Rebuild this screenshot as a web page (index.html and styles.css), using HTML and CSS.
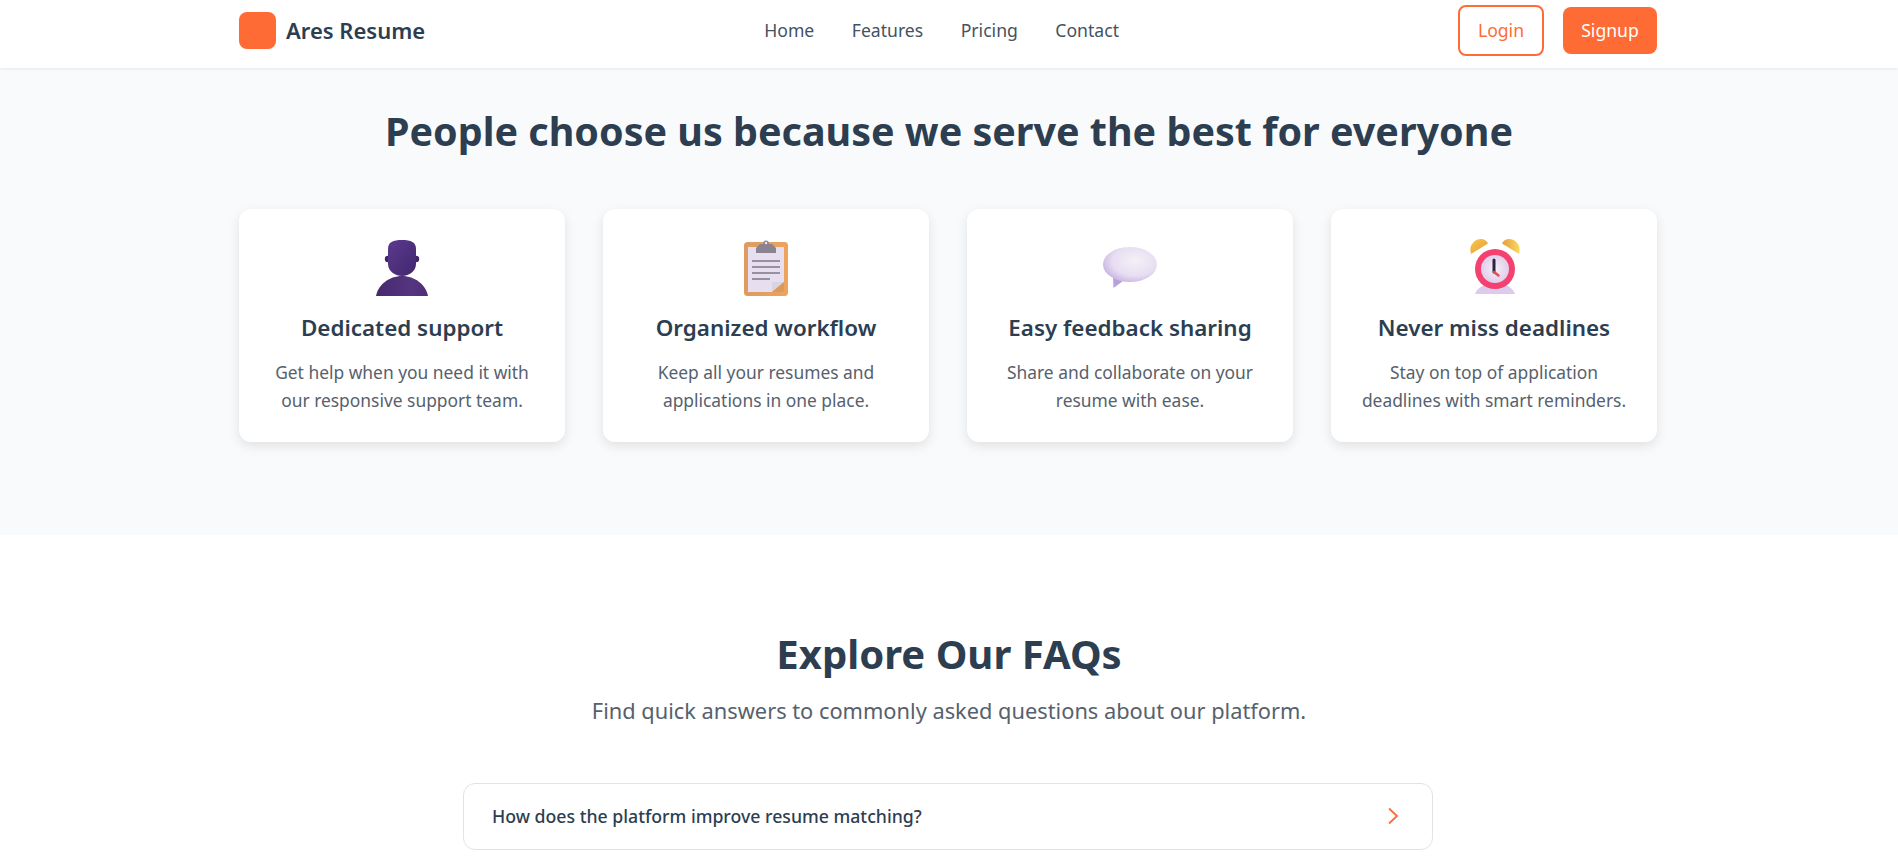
FILE: index.html
```html
<!DOCTYPE html>
<html lang="en">
<head>
<meta charset="utf-8">
<title>Ares Resume</title>
<link rel="stylesheet" href="styles.css">
</head>
<body>
<header class="nav">
  <div class="nav-inner">
    <a class="brand"><span class="logo"></span><span class="brand-name">Ares Resume</span></a>
    <nav class="links"><a>Home</a><a>Features</a><a>Pricing</a><a>Contact</a></nav>
    <div class="actions"><a class="btn btn-outline">Login</a><a class="btn btn-fill">Signup</a></div>
  </div>
</header>
<section class="why">
  <h1>People choose us because we serve the best for everyone</h1>
  <div class="cards">
    <article class="card">
      <svg class="ico" viewBox="0 0 64 64"><defs><linearGradient id="p" x1="0" y1="0" x2="1" y2="1"><stop offset="0" stop-color="#5b3a8e"/><stop offset="1" stop-color="#41276d"/></linearGradient><linearGradient id="pb" x1="0" y1="0" x2="1" y2="0"><stop offset="0" stop-color="#45296f"/><stop offset="0.700" stop-color="#56357f"/><stop offset="1" stop-color="#4c2e77"/></linearGradient></defs><circle cx="18" cy="23" r="3.200" fill="#3f2469"/><circle cx="46" cy="23" r="3.200" fill="#3f2469"/><path d="M18 13C18 6 23 4 32 4S46 6 46 13V28C46 36 38 40 32 40S18 36 18 28Z" fill="url(#p)"/><path d="M6 60C8 49 19 40 32 40S56 49 58 60Z" fill="url(#pb)"/></svg>
      <h3>Dedicated support</h3>
      <p>Get help when you need it with our responsive support team.</p>
    </article>
    <article class="card">
      <svg class="ico" viewBox="0 0 64 64"><defs><linearGradient id="b" x1="0" y1="0" x2="1" y2="0"><stop offset="0" stop-color="#dd9a63"/><stop offset="1" stop-color="#eda45e"/></linearGradient></defs><rect x="10" y="6" width="44" height="54" rx="3.500" fill="url(#b)"/><path d="M14 11H50V46L38 56H14Z" fill="#e6dff0"/><path d="M38 56V48Q38 46 40 46H50Z" fill="#d9d4e0"/><path d="M38 56L50 46V54Q50 56 48 56Z" fill="#d99a5e"/><path d="M22 12L26 8H29A3 3.500 0 1 1 35 8H38L42 12V17H22Z" fill="#8b8390"/><circle cx="32" cy="7" r="1.300" fill="#e8dfea"/><path d="M18 25H46M18 31H46M18 37H46M18 43H36" stroke="#99909f" stroke-width="2"/></svg>
      <h3>Organized workflow</h3>
      <p>Keep all your resumes and applications in one place.</p>
    </article>
    <article class="card">
      <svg class="ico" viewBox="0 0 64 64"><defs><radialGradient id="s" cx="0.600" cy="0.400" r="0.650"><stop offset="0" stop-color="#f4f0f7"/><stop offset="0.650" stop-color="#e7def2"/><stop offset="1" stop-color="#c7b5e0"/></radialGradient></defs><path d="M15 40L15.500 52L25 45Z" fill="#b7a1dc"/><ellipse cx="32" cy="28.500" rx="27" ry="17.500" fill="url(#s)"/></svg>
      <h3>Easy feedback sharing</h3>
      <p>Share and collaborate on your resume with ease.</p>
    </article>
    <article class="card">
      <svg class="ico" viewBox="0 0 64 64"><defs><radialGradient id="f" cx="0.500" cy="0.500" r="0.600"><stop offset="0" stop-color="#f5eff8"/><stop offset="1" stop-color="#dcc8e8"/></radialGradient><linearGradient id="y" x1="0" y1="0" x2="1" y2="1"><stop offset="0" stop-color="#f7c84a"/><stop offset="1" stop-color="#e79a3c"/></linearGradient><linearGradient id="y2" x1="0" y1="0" x2="1" y2="0"><stop offset="0" stop-color="#e79a3c"/><stop offset="1" stop-color="#f9dc5c"/></linearGradient></defs><path d="M9 18C6 9 13 3 19 3 22 3 25 5 26 7.500Z" fill="url(#y)"/><path d="M57 18C60 9 53 3 47 3 44 3 41 5 40 7.500Z" fill="url(#y2)"/><path d="M13 58C15 52 22 47 33 47S51 52 53 58Z" fill="#dccbec"/><circle cx="33" cy="33" r="20" fill="#f5416f"/><circle cx="33" cy="33" r="14" fill="url(#f)"/><path d="M32 24V36" stroke="#2f2440" stroke-width="3" stroke-linecap="round"/><path d="M32 36L36.500 39.500" stroke="#e84a55" stroke-width="2.500" stroke-linecap="round"/></svg>
      <h3>Never miss deadlines</h3>
      <p>Stay on top of application deadlines with smart reminders.</p>
    </article>
  </div>
</section>
<section class="faq">
  <h2>Explore Our FAQs</h2>
  <p class="lead">Find quick answers to commonly asked questions about our platform.</p>
  <div class="faq-item">
    <span>How does the platform improve resume matching?</span>
    <svg class="chev" viewBox="0 0 12 18"><path d="M2 1.500L10 9L2 16.500" fill="none" stroke="#ff6b35" stroke-width="1.800"/></svg>
  </div>
</section>
</body>
</html>
```
FILE: styles.css
```css
* { box-sizing: border-box; }
html, body { margin: 0; height: 859px; overflow: hidden; }
body { font-family: "Noto Sans", "Open Sans", sans-serif; color: #2c3e50; background: #fff; }
.nav { height: 68px; padding-bottom: 8px; background: #fff; box-shadow: 0 1px 3px rgba(0,0,0,.08); position: relative; }
.nav-inner { width: 1418px; height: 100%; margin-left: 239px; display: flex; justify-content: space-between; align-items: center; }
.brand { display: flex; align-items: center; gap: 10px; }
.logo { width: 37px; height: 37px; border-radius: 8px; background: #ff6b35; }
.brand-name { font-size: 22px; font-weight: 600; }
.links { display: flex; gap: 37.5px; font-size: 17.6px; color: #44525f; }
.actions { display: flex; align-items: center; gap: 19px; }
.btn { display: flex; align-items: center; justify-content: center; font-size: 17.6px; border-radius: 8px; }
.btn-outline { width: 86px; height: 51px; border: 2px solid #ff6b35; color: #ff6b35; }
.btn-fill { width: 94px; height: 47px; background: #ff6b35; color: #fff; }
.why { height: 467px; background: #f9fafb; padding-top: 31px; }
h1 { margin: 0 0 46px; text-align: center; font-size: 39.47px; line-height: 64px; font-weight: 700; }
.cards { width: 1418px; margin-left: 239px; display: grid; grid-template-columns: repeat(4, 326px); gap: 38px; }
.card { height: 233px; background: #fff; border-radius: 12px; box-shadow: 0 4px 12px rgba(0,0,0,.1); padding: 27px 20px 0; text-align: center; }
.ico { display: block; width: 64px; height: 64px; margin: 0 auto 12px; }
h3 { margin: 0 0 14px; font-size: 22.4px; line-height: 32px; font-weight: 600; }
.card p { margin: 0; font-size: 17.4px; line-height: 28px; color: #56616d; }
.faq { padding-top: 87px; }
h2 { margin: 0; text-align: center; font-size: 40.1px; line-height: 64px; font-weight: 700; }
.lead { margin: 8px 0 0; text-align: center; font-size: 21.8px; line-height: 34px; color: #56616d; }
.faq-item { width: 970px; height: 67px; margin: 55px 0 0 463px; border: 1px solid #e3e3e6; border-radius: 12px; padding: 0 33px 2px 28px; display: flex; align-items: center; justify-content: space-between; font-size: 17.7px; font-weight: 500; }
.chev { width: 12px; height: 18px; }
```
